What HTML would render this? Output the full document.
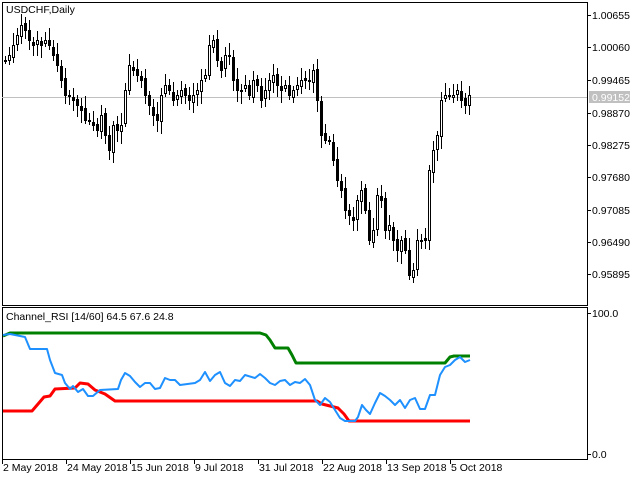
<!DOCTYPE html>
<html><head><meta charset="utf-8"><style>
html,body{margin:0;padding:0;background:#fff;width:640px;height:480px;overflow:hidden}
svg{display:block}
text{font-family:"Liberation Sans",sans-serif;font-size:10.5px;fill:#000}
</style></head><body>
<svg id="s" width="640" height="480" xmlns="http://www.w3.org/2000/svg" shape-rendering="crispEdges">
<rect x="2.5" y="2.5" width="585" height="303" fill="none" stroke="#000"/>
<rect x="2.5" y="307.5" width="585" height="152" fill="none" stroke="#000"/>
<line x1="2" y1="97.5" x2="587" y2="97.5" stroke="#c0c0c0"/>
<g id="c"></g>
<g id="ind" shape-rendering="auto"></g>
<text x="6" y="13">USDCHF,Daily</text>
<text x="6" y="320">Channel_RSI [14/60] 64.5 67.6 24.8</text>
<g id="ax"></g>
<rect x="589" y="91" width="41" height="12" fill="#c0c0c0"/>
<text x="592" y="101" style="fill:#fff">0.99152</text>
</svg>
<script>
(function(){
var NS="http://www.w3.org/2000/svg";
function el(p,t,a,txt){var e=document.createElementNS(NS,t);for(var k in a)e.setAttribute(k,a[k]);if(txt)e.textContent=txt;p.appendChild(e);return e;}
var ax=document.getElementById('ax');
var labs=[["1.00655",15],["1.00060",47],["0.99465",80],["0.98870",113],["0.98275",145],["0.97680",177],["0.97085",210],["0.96490",242],["0.95895",274]];
labs.forEach(function(l){el(ax,'line',{x1:587,y1:l[1]+.5,x2:591,y2:l[1]+.5,stroke:'#000'});el(ax,'text',{x:592,y:l[1]+4},l[0]);});
el(ax,'line',{x1:587,y1:313.5,x2:591,y2:313.5,stroke:'#000'});el(ax,'text',{x:592,y:317},"100.0");
el(ax,'line',{x1:587,y1:454.5,x2:591,y2:454.5,stroke:'#000'});el(ax,'text',{x:592,y:458},"0.0");
var dates=["2 May 2018","24 May 2018","15 Jun 2018","9 Jul 2018","31 Jul 2018","22 Aug 2018","13 Sep 2018","5 Oct 2018"];
dates.forEach(function(d,i){var x=2+64*i;el(ax,'line',{x1:x+.5,y1:460,x2:x+.5,y2:464,stroke:'#000'});el(ax,'text',{x:x+1,y:471},d);});
var cl=[60,55,45,35,25,30,40,45,40,45,40,45,55,65,80,95,95,100,105,110,120,120,125,130,115,135,150,125,130,125,90,65,70,75,80,95,105,115,120,95,85,90,100,95,90,95,100,95,90,80,75,45,40,60,70,55,55,80,90,90,85,95,80,85,100,90,80,75,85,90,85,95,90,85,80,80,80,70,100,135,140,140,160,180,190,210,215,220,200,190,210,240,230,195,200,230,225,240,250,240,250,275,270,240,240,240,170,150,135,100,95,95,95,90,100,105,95];
var c=document.getElementById('c');var prev=62;
for(var i=0;i<cl.length;i++){
 var x=4+i*4,o=prev+((i*7)%5-2),cc=cl[i];
 var t1=Math.min(o,cc),b1=Math.max(o,cc);
 var hi=t1-4-((i*13)%9),lo=b1+4+((i*11)%10);
 el(c,'line',{x1:x+1.5,y1:hi,x2:x+1.5,y2:lo,stroke:'#000'});
 if(b1-t1<1)b1=t1+1;
 if(cc>o) el(c,'rect',{x:x+0.5,y:t1+.5,width:2,height:b1-t1,fill:'#000',stroke:'#000'});
 else el(c,'rect',{x:x+0.5,y:t1+.5,width:2,height:b1-t1,fill:'#fff',stroke:'#000'});
 prev=cc;
}
var g=document.getElementById('ind');
function pl(pts,col,w){el(g,'polyline',{points:pts.map(function(p){return p.join(',')}).join(' '),fill:'none',stroke:col,'stroke-width':w,'stroke-linejoin':'round'});}
pl([[3,336],[10,333],[260,333],[266,335],[270,340],[275,348],[288,348],[292,355],[296,363],[445,363],[450,357],[454,356],[470,356]],'#008000',3);
pl([[3,411],[32,411],[38,404],[44,397],[50,396],[55,389],[75,388],[80,383],[88,384],[95,390],[105,394],[115,401],[317,401],[322,404],[330,406],[338,408],[344,414],[349,421],[470,421]],'#ff0000',3);
pl([[3,335],[10,334],[20,336],[25,337],[30,349],[47,349],[50,360],[55,373],[62,375],[65,383],[70,389],[73,386],[78,392],[83,389],[88,396],[93,396],[100,390],[118,389],[121,380],[125,373],[130,376],[135,382],[140,387],[145,383],[150,383],[155,389],[160,388],[165,378],[170,380],[175,380],[180,385],[195,383],[200,380],[205,372],[210,381],[215,375],[220,372],[225,383],[230,386],[235,380],[240,381],[245,375],[255,378],[260,374],[265,378],[270,383],[275,385],[280,381],[285,380],[290,385],[295,382],[300,383],[305,379],[310,385],[315,400],[320,405],[325,398],[330,402],[335,410],[340,418],[345,421],[355,421],[358,417],[362,405],[366,410],[370,414],[375,403],[380,393],[385,396],[390,400],[395,405],[400,400],[405,408],[410,400],[415,398],[420,409],[425,409],[430,395],[435,395],[440,375],[445,367],[450,365],[455,360],[460,357],[465,362],[470,360]],'#1e90ff',2);
})();
</script>
</body></html>
